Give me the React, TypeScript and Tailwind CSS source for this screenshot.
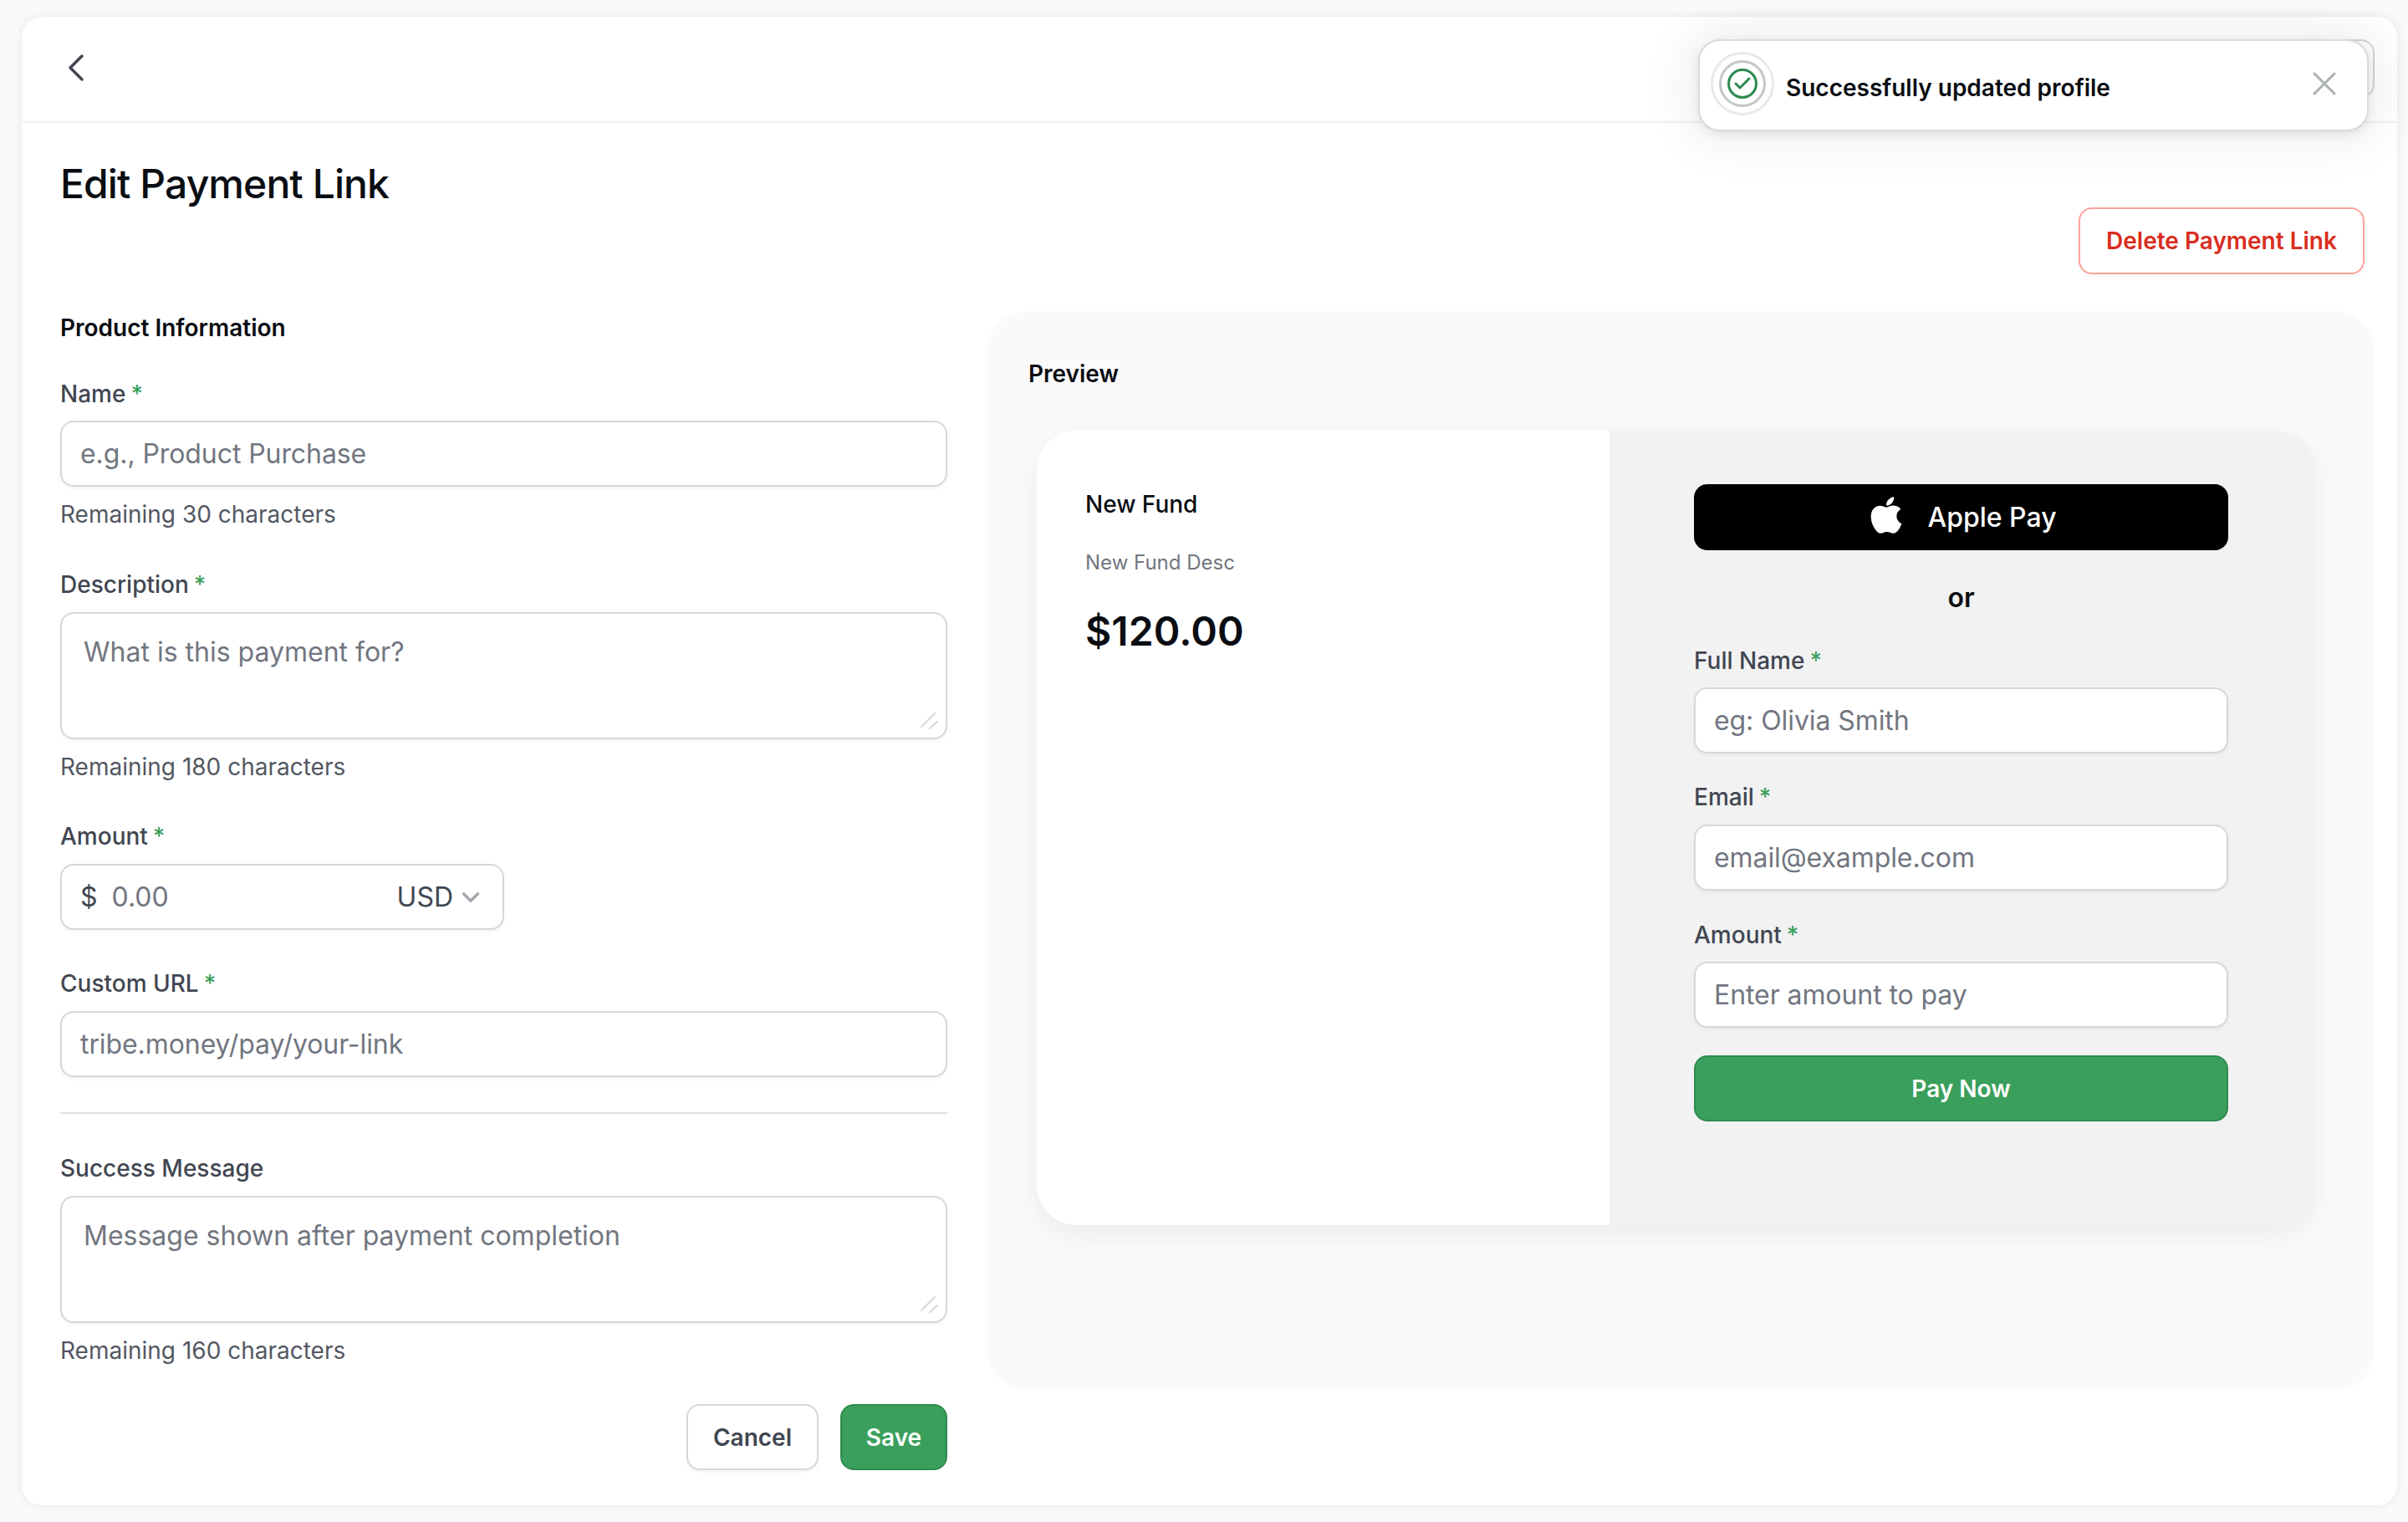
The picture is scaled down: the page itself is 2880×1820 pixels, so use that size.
import { ChevronDown, ChevronLeft, Check, X } from "lucide-react";
import { FaApple } from "react-icons/fa";

const FONT = "[font-family:Inter,'Liberation_Sans',sans-serif]";

function Label({ text, required = true }: { text: string; required?: boolean }) {
  return (
    <label className="block h-[36px] text-[28px] leading-[36px] font-medium text-[#414651]">
      {text}
      {required && <span className="ml-[6px] text-[#3a9f5c]">*</span>}
    </label>
  );
}

function Hint({ text }: { text: string }) {
  return <p className="mt-[15px] h-[36px] text-[28px] leading-[36px] text-[#535862]">{text}</p>;
}

function TextInput({ placeholder, tight = false }: { placeholder: string; tight?: boolean }) {
  return (
    <input
      placeholder={placeholder}
      className={`${tight ? "mt-[14px]" : "mt-[15px]"} block h-[79px] w-full rounded-[16px] border-2 border-[#d5d7da] bg-white px-[22px] text-[32px] tracking-[-0.08px] text-[#181d27] shadow-[0_2px_4px_rgba(10,13,18,0.05)] outline-none placeholder:text-[#717680]`}
    />
  );
}

function TextArea({ placeholder }: { placeholder: string }) {
  return (
    <div className="relative mt-[15px]">
      <textarea
        placeholder={placeholder}
        className="block h-[152px] w-full resize-none rounded-[16px] border-2 border-[#d5d7da] bg-white px-[26px] py-[22px] text-[32px] leading-[48px] text-[#181d27] shadow-[0_2px_4px_rgba(10,13,18,0.05)] outline-none placeholder:text-[#717680]"
      />
      <svg className="absolute right-[9px] bottom-[11px]" width="24" height="22" viewBox="0 0 24 22" fill="none" stroke="#d5d7da" strokeWidth="2" strokeLinecap="round">
        <path d="M2 18 18 2" />
        <path d="M12 20 21 12" />
      </svg>
    </div>
  );
}

function Toast() {
  return (
    <div className="absolute top-[27px] right-[34px] flex h-[110px] w-[802px] items-center rounded-[26px] border-2 border-[#d8dbdb] bg-white pr-[27px] pl-[13px] shadow-[0_4px_12px_rgba(10,13,18,0.08),0_0_60px_10px_rgba(10,13,18,0.08)]">
      <div className="mb-[4px] flex h-[76px] w-[76px] shrink-0 items-center justify-center rounded-full border-[3px] border-[#e9e9e9]">
        <div className="flex h-[56px] w-[56px] items-center justify-center rounded-full border-[3px] border-[#c2c7c7]">
          <div className="flex h-[36px] w-[36px] items-center justify-center rounded-full border-[3px] border-[#2b8a4e]">
            <Check size={24} strokeWidth={3} className="text-[#2b8a4e]" />
          </div>
        </div>
      </div>
      <span className="mt-[5px] ml-[14px] flex-1 text-[28px] font-semibold text-[#0a0d12]">Successfully updated profile</span>
      <X size={48} strokeWidth={1.5} className="mb-[4px] text-[#a9b0ad]" />
    </div>
  );
}

function PreviewCard() {
  return (
    <div className="mt-[50px] ml-[10px] flex h-[950px] w-[1530px] overflow-hidden rounded-[48px] shadow-[0_12px_32px_rgba(10,13,18,0.06)]">
      <div className="w-[685px] bg-white pt-[70px] pl-[58px]">
        <p className="text-[28px] leading-[36px] font-medium text-[#0a0d12]">New Fund</p>
        <p className="mt-[36px] text-[24px] leading-[32px] text-[#717680]">New Fund Desc</p>
        <p className="mt-[36px] text-[48px] leading-[60px] font-semibold tracking-[0.1px] text-[#0a0d12]">$120.00</p>
      </div>
      <div className="flex-1 bg-[#f2f2f2] pt-[64px] pl-[101px]">
        <div className="w-[639px]">
          <button className="flex h-[79px] w-full items-center justify-center gap-[24px] rounded-[16px] bg-black text-[32px] font-medium text-white">
            <FaApple size={50} className="mb-[6px]" />
            Apple Pay
          </button>
          <p className="mt-[39px] h-[36px] text-center text-[32px] leading-[36px] font-semibold text-[#0a0d12]">or</p>
          <div className="mt-[39px]">
            <Label text="Full Name" />
            <TextInput placeholder="eg: Olivia Smith" tight />
          </div>
          <div className="mt-[34px]">
            <Label text="Email" />
            <TextInput placeholder="email@example.com" />
          </div>
          <div className="mt-[35px]">
            <Label text="Amount" />
            <TextInput placeholder="Enter amount to pay" tight />
          </div>
          <button className="mt-[33px] h-[79px] w-full rounded-[16px] border-2 border-[#2f8a4e] bg-[#3a9f5c] text-[28px] font-semibold text-white">
            Pay Now
          </button>
        </div>
      </div>
    </div>
  );
}

export default function App() {
  return (
    <div className={`${FONT} min-h-[1820px] w-[2880px] bg-[#fafafa] pt-[20px] pb-[20px] pl-[26px]`}>
      <div className="relative h-[1780px] w-[2841px] rounded-[24px] bg-white shadow-[0_0_12px_rgba(10,13,18,0.08)]">
        <header className="flex h-[127px] items-start justify-between border-b-2 border-[#efefef] pl-[37px]">
          <ChevronLeft size={56} strokeWidth={1.5} className="mt-[33px] text-[#414651]" />
          <button className="mt-[27px] mr-[27px] h-[70px] w-[222px] rounded-[16px] border-2 border-[#d5d7da] bg-white" />
        </header>

        <main className="px-[46px] pr-[27px]">
          <div className="flex items-start justify-between">
            <h1 className="mt-[43px] text-[48px] leading-[60px] font-medium tracking-[-0.9px] text-[#0a0d12]">Edit Payment Link</h1>
            <button className="mt-[101px] mr-[12px] mb-[44px] h-[80px] w-[342px] rounded-[16px] border-2 border-[#fda29b] bg-white text-[28px] font-semibold text-[#d92d20] shadow-[0_2px_4px_rgba(10,13,18,0.05)]">
              Delete Payment Link
            </button>
          </div>

          <div className="flex items-start gap-[48px]">
            <form className="w-[1061px] shrink-0 pt-[2px]">
              <h2 className="mb-[43px] h-[36px] text-[28px] leading-[36px] font-semibold text-[#0a0d12]">Product Information</h2>
              <Label text="Name" />
              <TextInput placeholder="e.g., Product Purchase" tight />
              <Hint text="Remaining 30 characters" />

              <div className="mt-[48px]">
                <Label text="Description" />
                <TextArea placeholder="What is this payment for?" />
                <Hint text="Remaining 180 characters" />
              </div>

              <div className="mt-[47px]">
                <Label text="Amount" />
                <div className="mt-[15px] flex h-[79px] w-[531px] items-center rounded-[16px] border-2 border-[#d5d7da] bg-white pr-[21px] pl-[22px] text-[32px] shadow-[0_2px_4px_rgba(10,13,18,0.05)]">
                  <span className="text-[#414651]">$</span>
                  <span className="ml-[17px] flex-1 text-[#717680]">0.00</span>
                  <span className="text-[#414651]">USD</span>
                  <ChevronDown size={34} strokeWidth={2.4} className="ml-[4px] text-[#a4a7ae]" />
                </div>
              </div>

              <div className="mt-[46px]">
                <Label text="Custom URL" />
                <TextInput placeholder="tribe.money/pay/your-link" />
              </div>

              <hr className="mt-[42px] border-t-2 border-[#e0e0e0]" />

              <div className="mt-[47px]">
                <Label text="Success Message" required={false} />
                <TextArea placeholder="Message shown after payment completion" />
                <Hint text="Remaining 160 characters" />
              </div>

              <div className="mt-[46px] flex justify-end gap-[26px]">
                <button type="button" className="h-[79px] w-[158px] rounded-[16px] border-2 border-[#d5d7da] bg-white text-[28px] font-semibold text-[#414651] shadow-[0_2px_4px_rgba(10,13,18,0.05)]">
                  Cancel
                </button>
                <button type="button" className="h-[79px] w-[128px] rounded-[16px] border-2 border-[#2f8a4e] bg-[#3a9f5c] text-[28px] font-semibold text-white">
                  Save
                </button>
              </div>
            </form>

            <section className="h-[1291px] w-[1659px] rounded-[48px] bg-[#fafafa] pt-[57px] pl-[49px]">
              <h2 className="h-[36px] text-[28px] leading-[36px] font-semibold text-[#0a0d12]">Preview</h2>
              <PreviewCard />
            </section>
          </div>
        </main>

        <Toast />
      </div>
    </div>
  );
}
